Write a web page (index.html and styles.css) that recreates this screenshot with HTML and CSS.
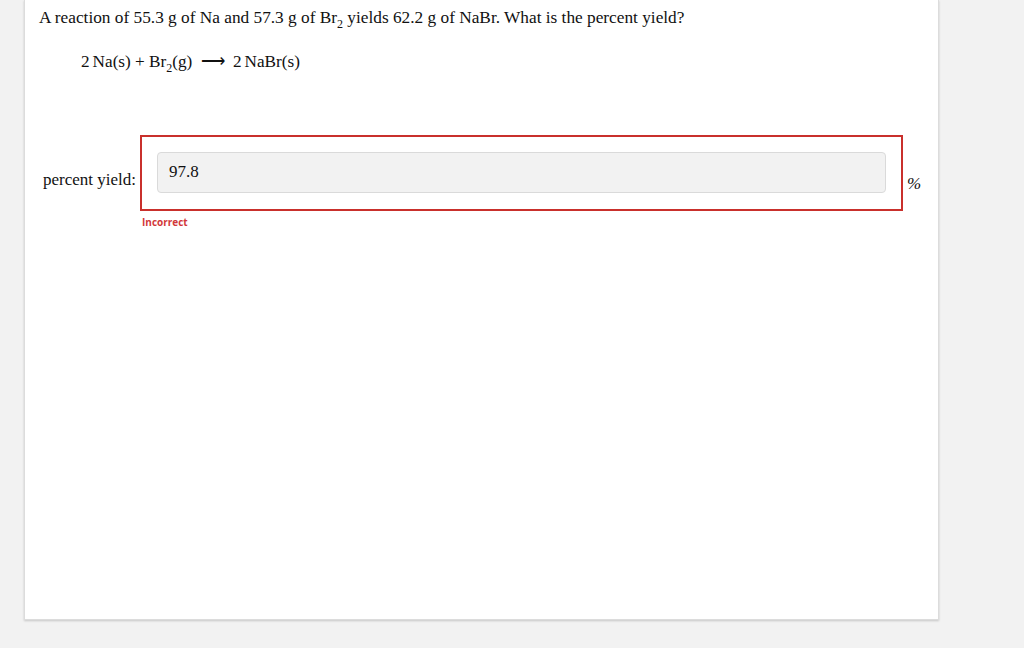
FILE: index.html
```html
<!DOCTYPE html>
<html>
<head>
<meta charset="utf-8">
<link rel="stylesheet" href="styles.css">
</head>
<body>
<div class="card">
  <p class="question">A reaction of 55.3 g of Na and 57.3 g of Br<sub>2</sub> yields 62.2 g of NaBr. What is the percent yield?</p>
  <p class="equation">2<span class="thin"></span>Na(s) + Br<sub>2</sub>(g) <span class="arrow">⟶</span> 2<span class="thin"></span>NaBr(s)</p>
  <div class="answer-row">
    <span class="label">percent yield:</span>
    <div class="field">
      <div class="box">
        <div class="input">97.8</div>
      </div>
      <div class="feedback">Incorrect</div>
    </div>
    <span class="unit">%</span>
  </div>
</div>
</body>
</html>
```
FILE: styles.css
```css
html, body {
  margin: 0;
  padding: 0;
  background: #f2f2f2;
  height: 100%;
}
body {
  font-family: "Liberation Serif", "Times New Roman", serif;
  color: #111;
}
.card {
  margin-left: 24px;
  width: 915px;
  height: 620px;
  background: #fff;
  border: 1px solid #dcdcdc;
  border-top: none;
  box-shadow: 0 1px 2px rgba(0,0,0,0.18);
  padding: 0 0 0 14px;
  box-sizing: border-box;
}
.question {
  margin: 0;
  padding-top: 8px;
  font-size: 17.3px;
  line-height: 20px;
}
sub {
  font-size: 12px;
  vertical-align: -5px;
  line-height: 0;
}
.equation {
  margin: 0;
  padding: 24px 0 0 42px;
  font-size: 17.2px;
  line-height: 20px;
}
.thin { display: inline-block; width: 3px; }
.arrow { margin: 0 4px; }
.answer-row {
  display: flex;
  align-items: flex-start;
  margin-top: 63px;
  padding-left: 4px;
}
.label {
  font-size: 17px;
  margin-top: 35px;
  margin-right: 4px;
}
.field {
  display: flex;
  flex-direction: column;
}
.box {
  width: 763px;
  height: 76px;
  border: 2px solid #c9302c;
  padding: 15px 15px 0 15px;
  box-sizing: border-box;
}
.input {
  height: 41px;
  background: #f2f2f2;
  border: 1px solid #dadada;
  border-radius: 4px;
  box-sizing: border-box;
  padding: 10px 11px;
  font-size: 17px;
  line-height: 18px;
}
.feedback {
  font-family: "Open Sans", "Liberation Sans", sans-serif;
  font-weight: 700;
  font-size: 10px;
  color: #d2383a;
  margin-top: 4px;
  padding-left: 2px;
}
.unit {
  font-size: 17px;
  margin-top: 39px;
  margin-left: 4px;
  font-style: italic;
}
```
